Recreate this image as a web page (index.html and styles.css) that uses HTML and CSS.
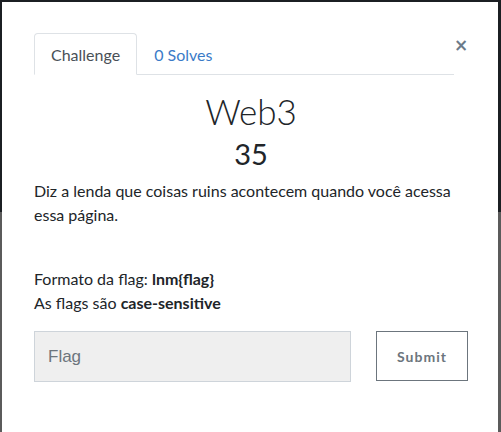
FILE: index.html
```html
<!DOCTYPE html>
<html lang="pt">
<head>
<meta charset="utf-8">
<title>Web3</title>
<link rel="stylesheet" href="styles.css">
</head>
<body>
<div class="modal">
  <div class="header">
    <ul class="tabs">
      <li class="tab active">Challenge</li>
      <li class="tab link">0 Solves</li>
    </ul>
    <span class="close">×</span>
  </div>
  <h2 class="title">Web3</h2>
  <h3 class="value">35</h3>
  <p class="desc">Diz a lenda que coisas ruins acontecem quando você acessa essa página.</p>
  <p class="info">Formato da flag: <b>lnm{flag}</b><br>As flags são <b>case-sensitive</b></p>
  <div class="submit-row">
    <input class="flag-input" type="text" placeholder="Flag">
    <button class="submit-btn">Submit</button>
  </div>
</div>
</body>
</html>
```
FILE: styles.css
```css
html, body {
  margin: 0;
  height: 100%;
}
body {
  padding: 2px 3px 0 2px;
  box-sizing: border-box;
  background: linear-gradient(to bottom, #1b1f23 0, #1b1f23 212px, #5b5b5b 212px);
  font-family: Lato, "Liberation Sans", sans-serif;
  color: #212529;
  overflow: hidden;
}
.modal {
  background: #fff;
  padding: 31px 30px 0 32px;
  height: 440px;
  box-sizing: border-box;
}
.header {
  display: flex;
  justify-content: space-between;
  align-items: flex-start;
}
.tabs {
  list-style: none;
  margin: 0;
  padding: 0;
  display: flex;
  flex: 0 0 420px;
  border-bottom: 1px solid #dee2e6;
}
.tab {
  padding: 0 16px;
  height: 40px;
  line-height: 41px;
  font-size: 16px;
  border: 1px solid transparent;
  border-top-left-radius: 4px;
  border-top-right-radius: 4px;
  margin-bottom: -1px;
}
.tab.active {
  color: #495057;
  border-color: #dee2e6 #dee2e6 #fff;
  background: #fff;
}
.tab.link {
  color: #3a7bc8;
}
.close {
  font-family: "DejaVu Sans", sans-serif;
  font-size: 17px;
  font-weight: bold;
  color: #6c7a89;
  line-height: 1;
  margin-top: 4px;
  margin-right: 3px;
}
.title {
  margin: 15px 0 0;
  text-align: center;
  font-size: 35px;
  font-weight: 300;
  line-height: 42px;
  color: #212529;
}
.value {
  margin: 4px 0 0;
  text-align: center;
  font-size: 29px;
  font-weight: 400;
  line-height: 35px;
}
.desc {
  margin: 8px 0 0;
  font-size: 16px;
  line-height: 24px;
}
.info {
  margin: 40px 0 0;
  font-size: 16px;
  line-height: 24px;
}
.info b {
  font-weight: 700;
}
.submit-row {
  display: flex;
  gap: 25px;
  margin-top: 16px;
}
.flag-input {
  flex: 1;
  height: 51px;
  box-sizing: border-box;
  border: 1px solid #ced4da;
  background: #efefef;
  padding: 0 13px;
  font-family: "Liberation Sans", Arial, sans-serif;
  font-size: 17px;
  color: #495057;
  outline: none;
}
.flag-input::placeholder {
  color: #6c757d;
}
.submit-btn {
  width: 92px;
  height: 50px;
  box-sizing: border-box;
  border: 1px solid #6c757d;
  background: #fff;
  color: #6c757d;
  font-family: Lato, sans-serif;
  font-weight: 700;
  font-size: 14px;
  letter-spacing: 1px;
}
```
